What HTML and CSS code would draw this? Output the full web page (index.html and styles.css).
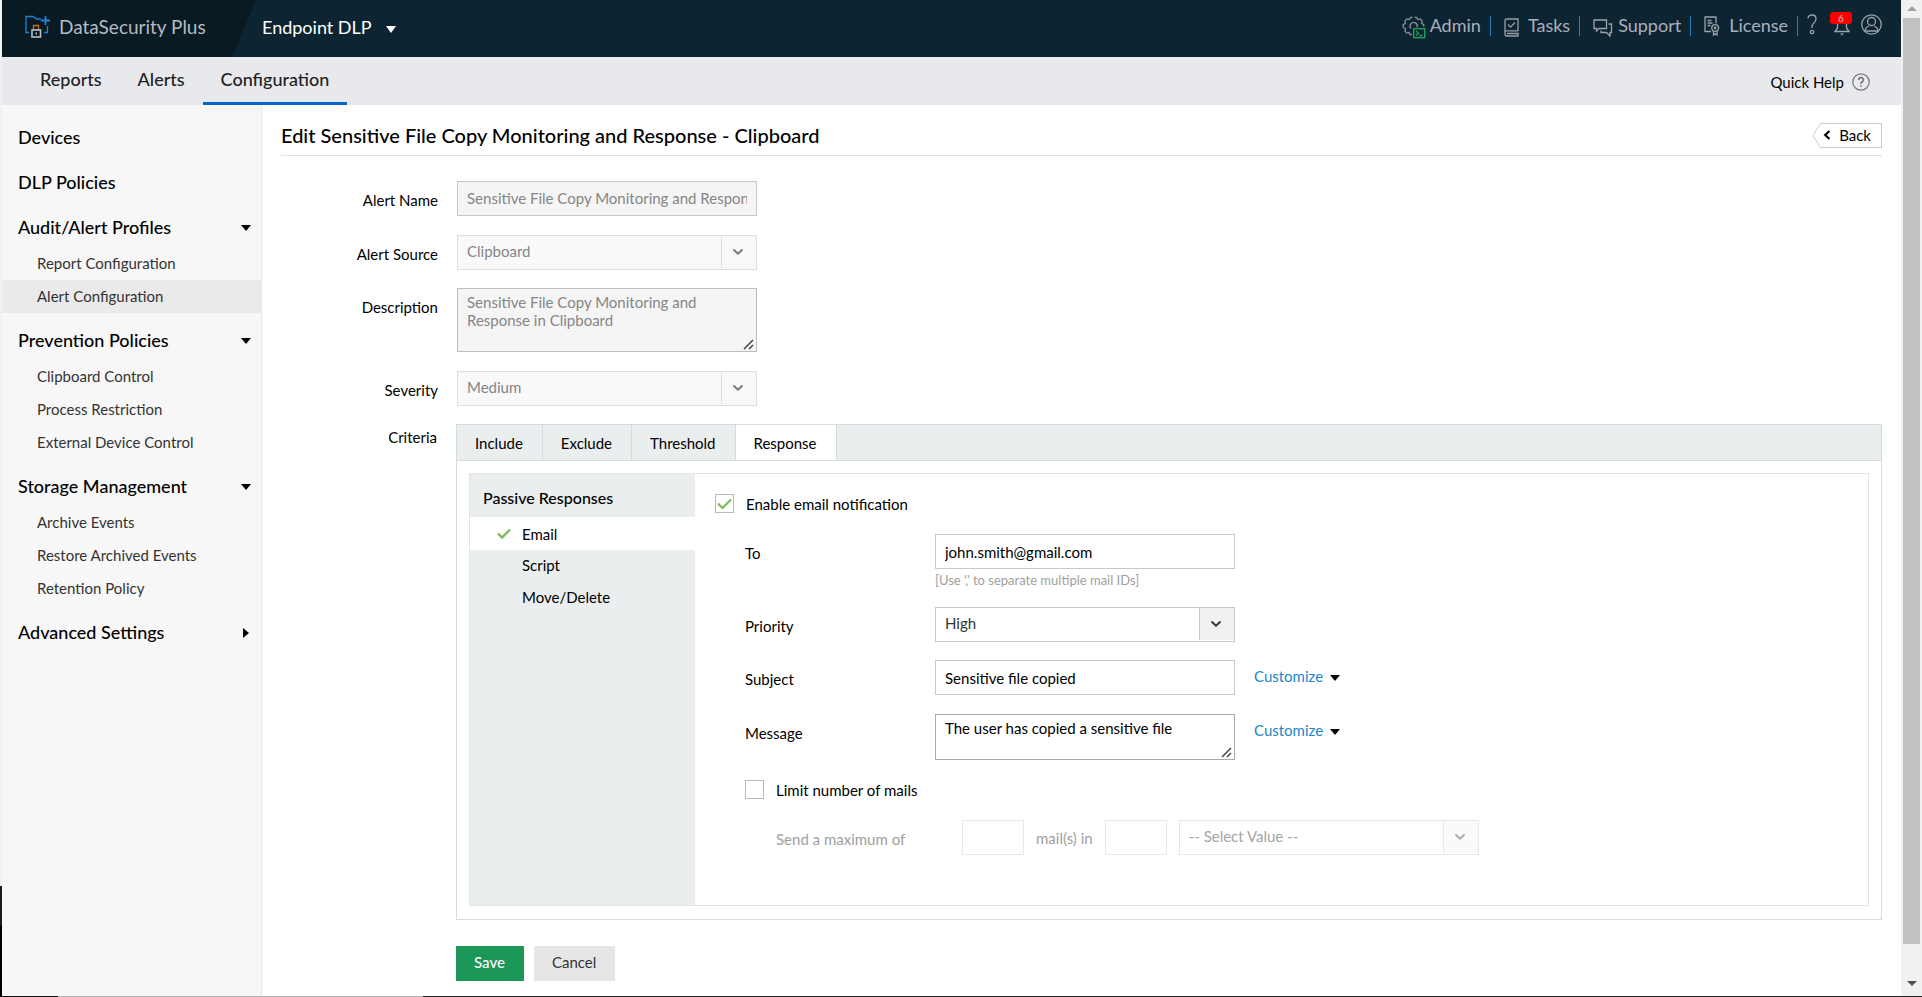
FILE: index.html
```html
<!DOCTYPE html>
<html lang="en">
<head>
<meta charset="utf-8">
<title>DataSecurity Plus - Endpoint DLP</title>
<link rel="stylesheet" href="styles.css">
</head>
<body>
<div class="window">
  <div class="edge"></div>
  <div class="app">
    <header class="topbar">
      <a class="brand" href="#">
        <svg width="26" height="24" viewBox="0 0 26 24" fill="none">
          <path d="M4 17.500H1V1.500H8L11.500 4H16" stroke="#1f84d6" stroke-width="1.300"/>
          <path d="M20.500 1v9M16 5.500h9" stroke="#1f84d6" stroke-width="1.800"/>
          <path d="M22.500 11v6.500H19" stroke="#1f84d6" stroke-width="1.300"/>
          <path d="M8.500 15v-4.500h5V15" stroke="#c86f1e" stroke-width="1.300"/>
          <rect x="7" y="15" width="8.500" height="7" stroke="#b9c0c4" stroke-width="1.600"/>
          <path d="M11.200 17.200v2.600" stroke="#b9c0c4" stroke-width="1.200"/>
        </svg>
        <span>DataSecurity Plus</span>
      </a>
      <button class="product" type="button">Endpoint DLP <svg width="10" height="7" viewBox="0 0 10 7"><path d="M0 0h10L5 7z" fill="#fff"/></svg></button>
      <nav class="tools">
        <a href="#" class="tool tool-admin">
          <svg width="24" height="23" viewBox="0 0 24 23" fill="none" stroke="#8a8f92" stroke-width="1.300">
            <path d="M10 18.300l-1.600.5-1.300-2.200-2.500.5-1.700-2 .7-2.300L1.200 11.200V8.600L3.500 7.200 3 4.800l1.900-1.900 2.400.6L8.700 1.300h1.800M12.500 1.300h2l1.200 2.200 2.500-.6 1.900 1.900-.6 2.400 2.300 1.400v2.200"/>
            <path d="M9 12.500a3.600 3.600 0 1 1 6-1.200"/>
            <rect x="11.700" y="12.700" width="11" height="9" stroke="#1fa05a" stroke-width="1.400"/>
            <path d="M14 15l2.500 2.200L14 19.400M17.200 19.500h3.300" stroke="#1fa05a"/>
          </svg><span>Admin</span></a>
        <a href="#" class="tool tool-tasks">
          <svg width="15" height="19" viewBox="0 0 15 19" fill="none" stroke="#9a9fa3" stroke-width="1.300">
            <path d="M14 13V1H2.500Q1 1 1 2.500V16q0 2 2 2h11v-3.500M1 14q0-1.200 2-1.200h11M3 15.500h11"/><path d="M4 6.500l2.500 2.600L11 4.500"/>
          </svg><span>Tasks</span></a>
        <a href="#" class="tool tool-support">
          <svg width="20" height="18" viewBox="0 0 20 18" fill="none" stroke="#9aa3aa" stroke-width="1.300">
            <path d="M1 1h12.500v8.500H6L3.500 12V9.500H1z"/><path d="M15.500 5H18.500v8.500H17V17l-3.500-3.500H8V11.500"/>
          </svg><span>Support</span></a>
        <a href="#" class="tool tool-license">
          <svg width="16" height="20" viewBox="0 0 16 20" fill="none" stroke="#9aa3aa" stroke-width="1.300">
            <path d="M7 15.500H1V1h11v6.500M3.500 4.500h4M3.500 7h5M3.500 9.500h3"/><circle cx="11.200" cy="12" r="3.400"/><circle cx="11.200" cy="12" r=".8"/><path d="M9.500 15v4l1.700-1.300L13 19v-4"/>
          </svg><span>License</span></a>
        <a href="#" class="tool-icon help" aria-label="Help"><svg width="10" height="21" viewBox="0 0 10 21" fill="none" stroke="#9aa3aa" stroke-width="1.300"><path d="M1 4.500Q1 1 5 1q4 0 4 3.800Q9 7.500 7 9t-2 3v2"/><circle cx="5" cy="18" r="1.700"/></svg></a>
        <a href="#" class="tool-icon bell" aria-label="Notifications"><svg width="16" height="22" viewBox="0 0 16 22" fill="none" stroke="#9aa3aa" stroke-width="1.400"><path d="M3.500 9.500V14L1 17.500h14L12.500 14V9.500"/><path d="M6 19.500h4L8 21.500z" fill="#9aa3aa" stroke="none"/></svg><span class="badge">6</span></a>
        <a href="#" class="tool-icon" aria-label="Account"><svg width="21" height="21" viewBox="0 0 21 21" fill="none" stroke="#9aa3aa" stroke-width="1.300"><circle cx="10.500" cy="10.500" r="9.700"/><circle cx="10.500" cy="7.500" r="4"/><path d="M4 17.500q0-4 4-5.500M17 17.500q0-4-4-5.500M4.500 17h12"/></svg></a>
      </nav>
    </header>
    <div class="mainnav">
      <nav class="navtabs">
        <a href="#">Reports</a><a href="#">Alerts</a><a href="#" class="active" aria-current="page">Configuration</a>
      </nav>
      <a class="quick" href="#">Quick Help
        <svg width="18" height="18" viewBox="0 0 18 18" fill="none" stroke="#777" stroke-width="1.200"><circle cx="9" cy="9" r="8.200"/><path d="M6.600 7q.2-2.400 2.500-2.400T11.400 7q0 1-1.200 1.700T9 10.500v.5M9 12.200v1.600" stroke-width="1.600"/></svg>
      </a>
    </div>
    <div class="body">
      <aside class="sidebar">
        <section><a class="group" href="#">Devices</a></section>
        <section><a class="group" href="#">DLP Policies</a></section>
        <section>
          <a class="group" href="#">Audit/Alert Profiles <svg width="10" height="6" viewBox="0 0 10 6"><path d="M0 0h10L5 6z"/></svg></a>
          <ul><li><a href="#">Report Configuration</a></li><li><a href="#" class="current">Alert Configuration</a></li></ul>
        </section>
        <section>
          <a class="group" href="#">Prevention Policies <svg width="10" height="6" viewBox="0 0 10 6"><path d="M0 0h10L5 6z"/></svg></a>
          <ul><li><a href="#">Clipboard Control</a></li><li><a href="#">Process Restriction</a></li><li><a href="#">External Device Control</a></li></ul>
        </section>
        <section>
          <a class="group" href="#">Storage Management <svg width="10" height="6" viewBox="0 0 10 6"><path d="M0 0h10L5 6z"/></svg></a>
          <ul><li><a href="#">Archive Events</a></li><li><a href="#">Restore Archived Events</a></li><li><a href="#">Retention Policy</a></li></ul>
        </section>
        <section><a class="group" href="#">Advanced Settings <svg width="8" height="10" viewBox="0 0 8 10"><path d="M0 0v10L6 5z"/></svg></a></section>
      </aside>
      <main class="content">
        <div class="titlebar">
          <h1>Edit Sensitive File Copy Monitoring and Response - Clipboard</h1>
          <a class="back" href="#">
            <svg class="back-tip" width="9" height="25" viewBox="0 0 9 25" fill="none" stroke="#ccc"><path d="M9 .5H8.500L.8 12.500l7.700 12H9"/></svg>
            <span class="back-body"><svg width="8" height="10" viewBox="0 0 8 10" fill="none" stroke="#000" stroke-width="2.200"><path d="M6.500 1L2.200 5l4.300 4"/></svg>Back</span>
          </a>
        </div>
        <form class="form">
          <div class="row">
            <label for="name">Alert Name</label>
            <input id="name" class="field" type="text" disabled value="Sensitive File Copy Monitoring and Response in Clipboard">
          </div>
          <div class="row row-select">
            <label for="source">Alert Source</label>
            <span class="select off"><select id="source" disabled><option>Clipboard</option></select><span class="arrow"><svg width="12" height="8" viewBox="0 0 12 8"><path d="M1.500 1.500L6 5.700l4.500-4.200"/></svg></span></span>
          </div>
          <div class="row">
            <label for="desc">Description</label>
            <textarea id="desc" class="field area" disabled>Sensitive File Copy Monitoring and Response in Clipboard</textarea>
          </div>
          <div class="row row-select">
            <label for="severity">Severity</label>
            <span class="select off"><select id="severity" disabled><option>Medium</option></select><span class="arrow"><svg width="12" height="8" viewBox="0 0 12 8"><path d="M1.500 1.500L6 5.700l4.500-4.200"/></svg></span></span>
          </div>
          <div class="criteria">
            <span class="criteria-label" id="crit">Criteria</span>
            <div class="panel" role="group" aria-labelledby="crit">
              <div class="tabs" role="tablist">
                <button type="button" role="tab">Include</button><button type="button" role="tab">Exclude</button><button type="button" role="tab">Threshold</button><button type="button" role="tab" class="active" aria-selected="true">Response</button>
              </div>
              <div class="response">
                <div class="kinds">
                  <h2>Passive Responses</h2>
                  <a href="#" class="on"><svg width="14" height="12" viewBox="0 0 14 12" fill="none" stroke="#7fba55" stroke-width="2.400"><path d="M1 5.500l4 4L13 1.500"/></svg>Email</a>
                  <a href="#">Script</a>
                  <a href="#">Move/Delete</a>
                </div>
                <div class="settings">
                  <label class="check"><input type="checkbox" checked><span>Enable email notification</span></label>
                  <div class="mail">
                    <div class="mrow">
                      <label for="to">To</label>
                      <div><input id="to" class="field low" type="text" value="john.smith@gmail.com"><p class="hint">[Use ',' to separate multiple mail IDs]</p></div>
                    </div>
                    <div class="mrow row-select">
                      <label for="priority">Priority</label>
                      <span class="select"><select id="priority"><option>High</option></select><span class="arrow"><svg width="12" height="8" viewBox="0 0 12 8"><path d="M1.500 1.500L6 5.700l4.500-4.200"/></svg></span></span>
                    </div>
                    <div class="mrow">
                      <label for="subject">Subject</label>
                      <input id="subject" class="field low" type="text" value="Sensitive file copied">
                      <a class="customize" href="#">Customize <svg width="10" height="6" viewBox="0 0 10 6"><path d="M0 0h10L5 6z"/></svg></a>
                    </div>
                    <div class="mrow">
                      <label for="message">Message</label>
                      <textarea id="message" class="field area short">The user has copied a sensitive file</textarea>
                      <a class="customize" href="#">Customize <svg width="10" height="6" viewBox="0 0 10 6"><path d="M0 0h10L5 6z"/></svg></a>
                    </div>
                    <label class="check limit"><input type="checkbox"><span>Limit number of mails</span></label>
                    <div class="max">
                      <label for="count" class="send">Send a maximum of</label>
                      <input id="count" class="field num" type="text" disabled>
                      <label for="span">mail(s) in</label>
                      <input id="span" class="field num" type="text" disabled>
                      <span class="select faint"><select disabled aria-label="Period"><option>-- Select Value --</option></select><span class="arrow"><svg width="12" height="8" viewBox="0 0 12 8"><path d="M1.500 1.500L6 5.700l4.500-4.200"/></svg></span></span>
                    </div>
                  </div>
                </div>
              </div>
            </div>
          </div>
          <div class="actions"><button type="submit" class="save">Save</button><button type="button" class="cancel">Cancel</button></div>
        </form>
      </main>
    </div>
  </div>
  <div class="scroll" aria-hidden="true">
    <svg width="10" height="5" viewBox="0 0 10 5"><path d="M0 5h10L5 0z" fill="#a3a3a3"/></svg>
    <div class="thumb"></div>
    <svg width="10" height="5" viewBox="0 0 10 5"><path d="M0 0h10L5 5z" fill="#505050"/></svg>
  </div>
</div>
<div class="baseline"></div>
</body>
</html>
```

FILE: styles.css
```css
* { box-sizing: border-box; }
body {
  margin: 0;
  min-height: 100vh;
  display: flex;
  flex-direction: column;
  background: #fff;
  color: #000;
  font: 15px/18px Lato, "Liberation Sans", sans-serif;
}
a { color: inherit; text-decoration: none; }
button, input, select, textarea { font: inherit; color: inherit; }
svg { display: block; flex: none; }

.window { flex: 1; display: grid; grid-template-columns: 2px minmax(0, 1fr) 21px; }
.edge { background: linear-gradient(#f1f1f1 89%, #1c1c1c 89%, #1c1c1c 93%, #000 93%); }
.baseline { height: 1px; background: linear-gradient(90deg, #111 3%, #b4b4b4 3%, #b4b4b4 22%, #222 22%); }
.app { display: flex; flex-direction: column; }

.topbar { height: 57px; display: flex; align-items: flex-start; background: #0d2533; color: #a9b0bb; }
.brand {
  width: 254px;
  height: 57px;
  padding: 15px 0 0 23px;
  display: flex;
  gap: 8px;
  font-size: 19px;
  line-height: 24px;
  color: #b5bac4;
  background: #091a22;
  clip-path: polygon(0 0, 100% 0, 230px 100%, 0 100%);
}
.product {
  display: flex;
  align-items: center;
  gap: 14px;
  margin: 15px auto 0 6px;
  padding: 0;
  border: 0;
  background: none;
  color: #fff;
  font-size: 18px;
  line-height: 24px;
}
.product svg { margin-top: 4px; }
.tools { display: flex; padding: 14px 19px 0 0; font-size: 18px; line-height: 22px; }
.tool { display: flex; align-items: flex-start; height: 22px; }
.tool svg { margin-top: 2px; }
.tool span { position: relative; padding-right: 10px; margin-right: 13px; }
.tool span::after { content: ""; position: absolute; right: 0; top: 2px; width: 1px; height: 20px; background: #2f7fb8; }
.tool-admin { gap: 4px; }
.tool-tasks { gap: 9px; }
.tool-tasks svg { margin-top: 4px; }
.tool-support { gap: 5px; }
.tool-support svg { margin-top: 5px; }
.tool-license { gap: 9px; }
.tool-license span { margin-right: 9px; }
.tool-icon { position: relative; }
.bell { margin: 0 11px 0 17px; }
.badge {
  position: absolute;
  left: -4px;
  top: -2px;
  width: 22px;
  border-radius: 3px;
  background: #f00;
  color: #cfcfcf;
  font-size: 10px;
  line-height: 12px;
  text-align: center;
}

.mainnav { height: 48px; display: flex; justify-content: space-between; background: #e8e9ed; }
.navtabs { display: flex; padding-left: 20px; font-size: 18px; font-weight: 500; color: #222; }
.navtabs a { padding: 11px 18px 0; line-height: 22px; border-bottom: 3px solid transparent; }
.navtabs .active { border-color: #06c; }
.quick { display: flex; align-items: center; gap: 8px; padding: 2px 31px 0 0; }

.body { flex: 1; display: grid; grid-template-columns: 260px minmax(0, 1fr); }
.sidebar { padding-top: 10px; background: #f7f7f7; border-right: 1px solid #e8e8e8; }
.sidebar section { padding-bottom: 1px; }
.group {
  display: flex;
  align-items: center;
  justify-content: space-between;
  height: 44px;
  padding: 0 10px 0 16px;
  font-size: 18px;
  font-weight: 500;
}
.group svg { margin-top: 2px; }
.sidebar ul { list-style: none; margin: -2px 0 0; padding: 0 0 4px; color: #333; }
.sidebar li a { display: block; padding-left: 35px; line-height: 33px; }
.sidebar .current { background: #eaeaea; }

.content { padding: 12px 19px 15px; }
.titlebar { display: flex; justify-content: space-between; border-bottom: 1px solid #e2e2e2; height: 39px; padding-top: 6px; }
h1 { margin: 0; font-size: 20px; line-height: 24px; font-weight: 500; }
.back { display: flex; height: 25px; }
.back-body {
  display: flex;
  align-items: center;
  gap: 8px;
  padding: 0 10px 1px 2px;
  border: 1px solid #ccc;
  border-left: 0;
}

.form { padding-top: 25px; }
.row { display: grid; grid-template-columns: 157px 300px; column-gap: 19px; margin-bottom: 19px; }
.row-select { margin-bottom: 18px; }
.row label { padding-top: 10px; text-align: right; }
.field {
  display: block;
  width: 300px;
  height: 35px;
  margin: 0;
  padding: 0 9px 2px;
  border: 1px solid #c8c8c8;
  border-radius: 0;
  background: #fff;
  outline: 0;
}
.low { padding: 0 9px; }
.field:disabled { background: #f5f5f5; color: #858585; }
.area { height: 64px; padding: 4px 9px; resize: vertical; border-color: #bdbdbd; }
.area::-webkit-resizer {
  background: url("data:image/svg+xml,%3Csvg xmlns='http://www.w3.org/2000/svg' width='15' height='15' fill='none' stroke='%23444' stroke-width='1.500'%3E%3Cpath d='M3 13L12 4M8 13l4-4'/%3E%3C/svg%3E") no-repeat;
}
.short { height: 46px; border-color: #a9a9a9; }
.select { position: relative; display: block; width: 300px; height: 35px; }
.select select {
  width: 100%;
  height: 100%;
  appearance: none;
  border: 1px solid #c8c8c8;
  border-radius: 0;
  background: #fff;
  color: #333;
  padding: 0 44px 3px 9px;
  opacity: 1;
}
.arrow {
  position: absolute;
  top: 1px;
  right: 1px;
  width: 35px;
  height: 32px;
  padding-right: 2px;
  display: grid;
  place-items: center;
  border-left: 1px solid #c8c8c8;
  background: #f1f1f1;
  pointer-events: none;
}
.arrow path { fill: none; stroke: #333; stroke-width: 2; }
.off select { background: #f9f9f9; border-color: #dedede; color: #858585; }
.off .arrow { background: #f9f9f9; border-color: #dedede; }
.off .arrow path { stroke: #777; }
.faint select { border-color: #e8e8e8; color: #a5a5a5; }
.faint .arrow { border-color: #e8e8e8; background: #fafafa; }
.faint .arrow path { stroke: #aaa; }

.criteria { display: grid; grid-template-columns: 156px minmax(0, 1fr); column-gap: 19px; }
.criteria-label { padding-top: 4px; text-align: right; }
.panel { border: 1px solid #d5dadc; }
.tabs { display: flex; height: 36px; background: #eaeeef; border-bottom: 1px solid #d5dadc; }
.tabs button { padding: 0 19px 0 18px; border: 0; border-right: 1px solid #d5dadc; background: none; }
.tabs .active { background: #fff; }
.response {
  display: grid;
  grid-template-columns: 225px minmax(0, 1fr);
  min-height: 433px;
  margin: 12px 12px 13px;
  border: 1px solid #e2e4e5;
}
.kinds { background: #eaeeef; }
h2 { margin: 0; padding: 7px 13px 0; height: 43px; font-size: 16px; line-height: 34px; font-weight: 500; }
.kinds a { display: flex; align-items: center; height: 32px; padding: 0 0 2px 52px; }
.kinds .on { height: 33px; padding: 0 0 0 27px; gap: 11px; background: #fff; }
.settings { padding: 20px; }
.check { display: flex; align-items: center; gap: 12px; }
.check input {
  appearance: none;
  width: 19px;
  height: 19px;
  margin: 0;
  border: 1px solid #b9b9b9;
  background: #fff;
}
.check input:checked {
  background: url("data:image/svg+xml,%3Csvg xmlns='http://www.w3.org/2000/svg' width='17' height='17' fill='none' stroke='%237fba55' stroke-width='2.200'%3E%3Cpath d='M2 8.500l4.500 4.500L15 4.500'/%3E%3C/svg%3E") no-repeat;
}
.mail { padding: 21px 0 0 30px; }
.mrow { display: grid; grid-template-columns: 171px 300px auto; column-gap: 19px; justify-content: start; margin-bottom: 19px; }
.mrow.row-select { margin-bottom: 18px; }
.mrow label { padding-top: 10px; }
.hint { margin: 3px 0 0; font-size: 13px; line-height: 16px; color: #a0a0a0; }
.customize { display: flex; align-items: center; gap: 7px; height: 32px; color: #2385c8; }
.customize svg { margin-top: 3px; }
.limit { padding-top: 1px; }
.max { display: flex; align-items: center; gap: 12px; margin-top: 21px; color: #a0a0a0; }
.max .send { width: 174px; margin-left: 31px; padding-top: 2px; }
.num { width: 62px; }
.num:disabled { background: #fff; border-color: #e8e8e8; }

.actions { display: flex; gap: 10px; padding: 26px 0 0 175px; }
.actions button { height: 35px; padding: 0 19px 3px 18px; border: 0; }
.save { background: #1c9758; color: #fff; font-weight: 500; }
.cancel { background: #e6e6e6; color: #333; }

.scroll { display: flex; flex-direction: column; align-items: center; padding: 6px 0 10px; background: #f1f1f1; }
.thumb { flex: 1; width: 17px; margin: 7px 0 37px; background: #c1c1c1; }
```
